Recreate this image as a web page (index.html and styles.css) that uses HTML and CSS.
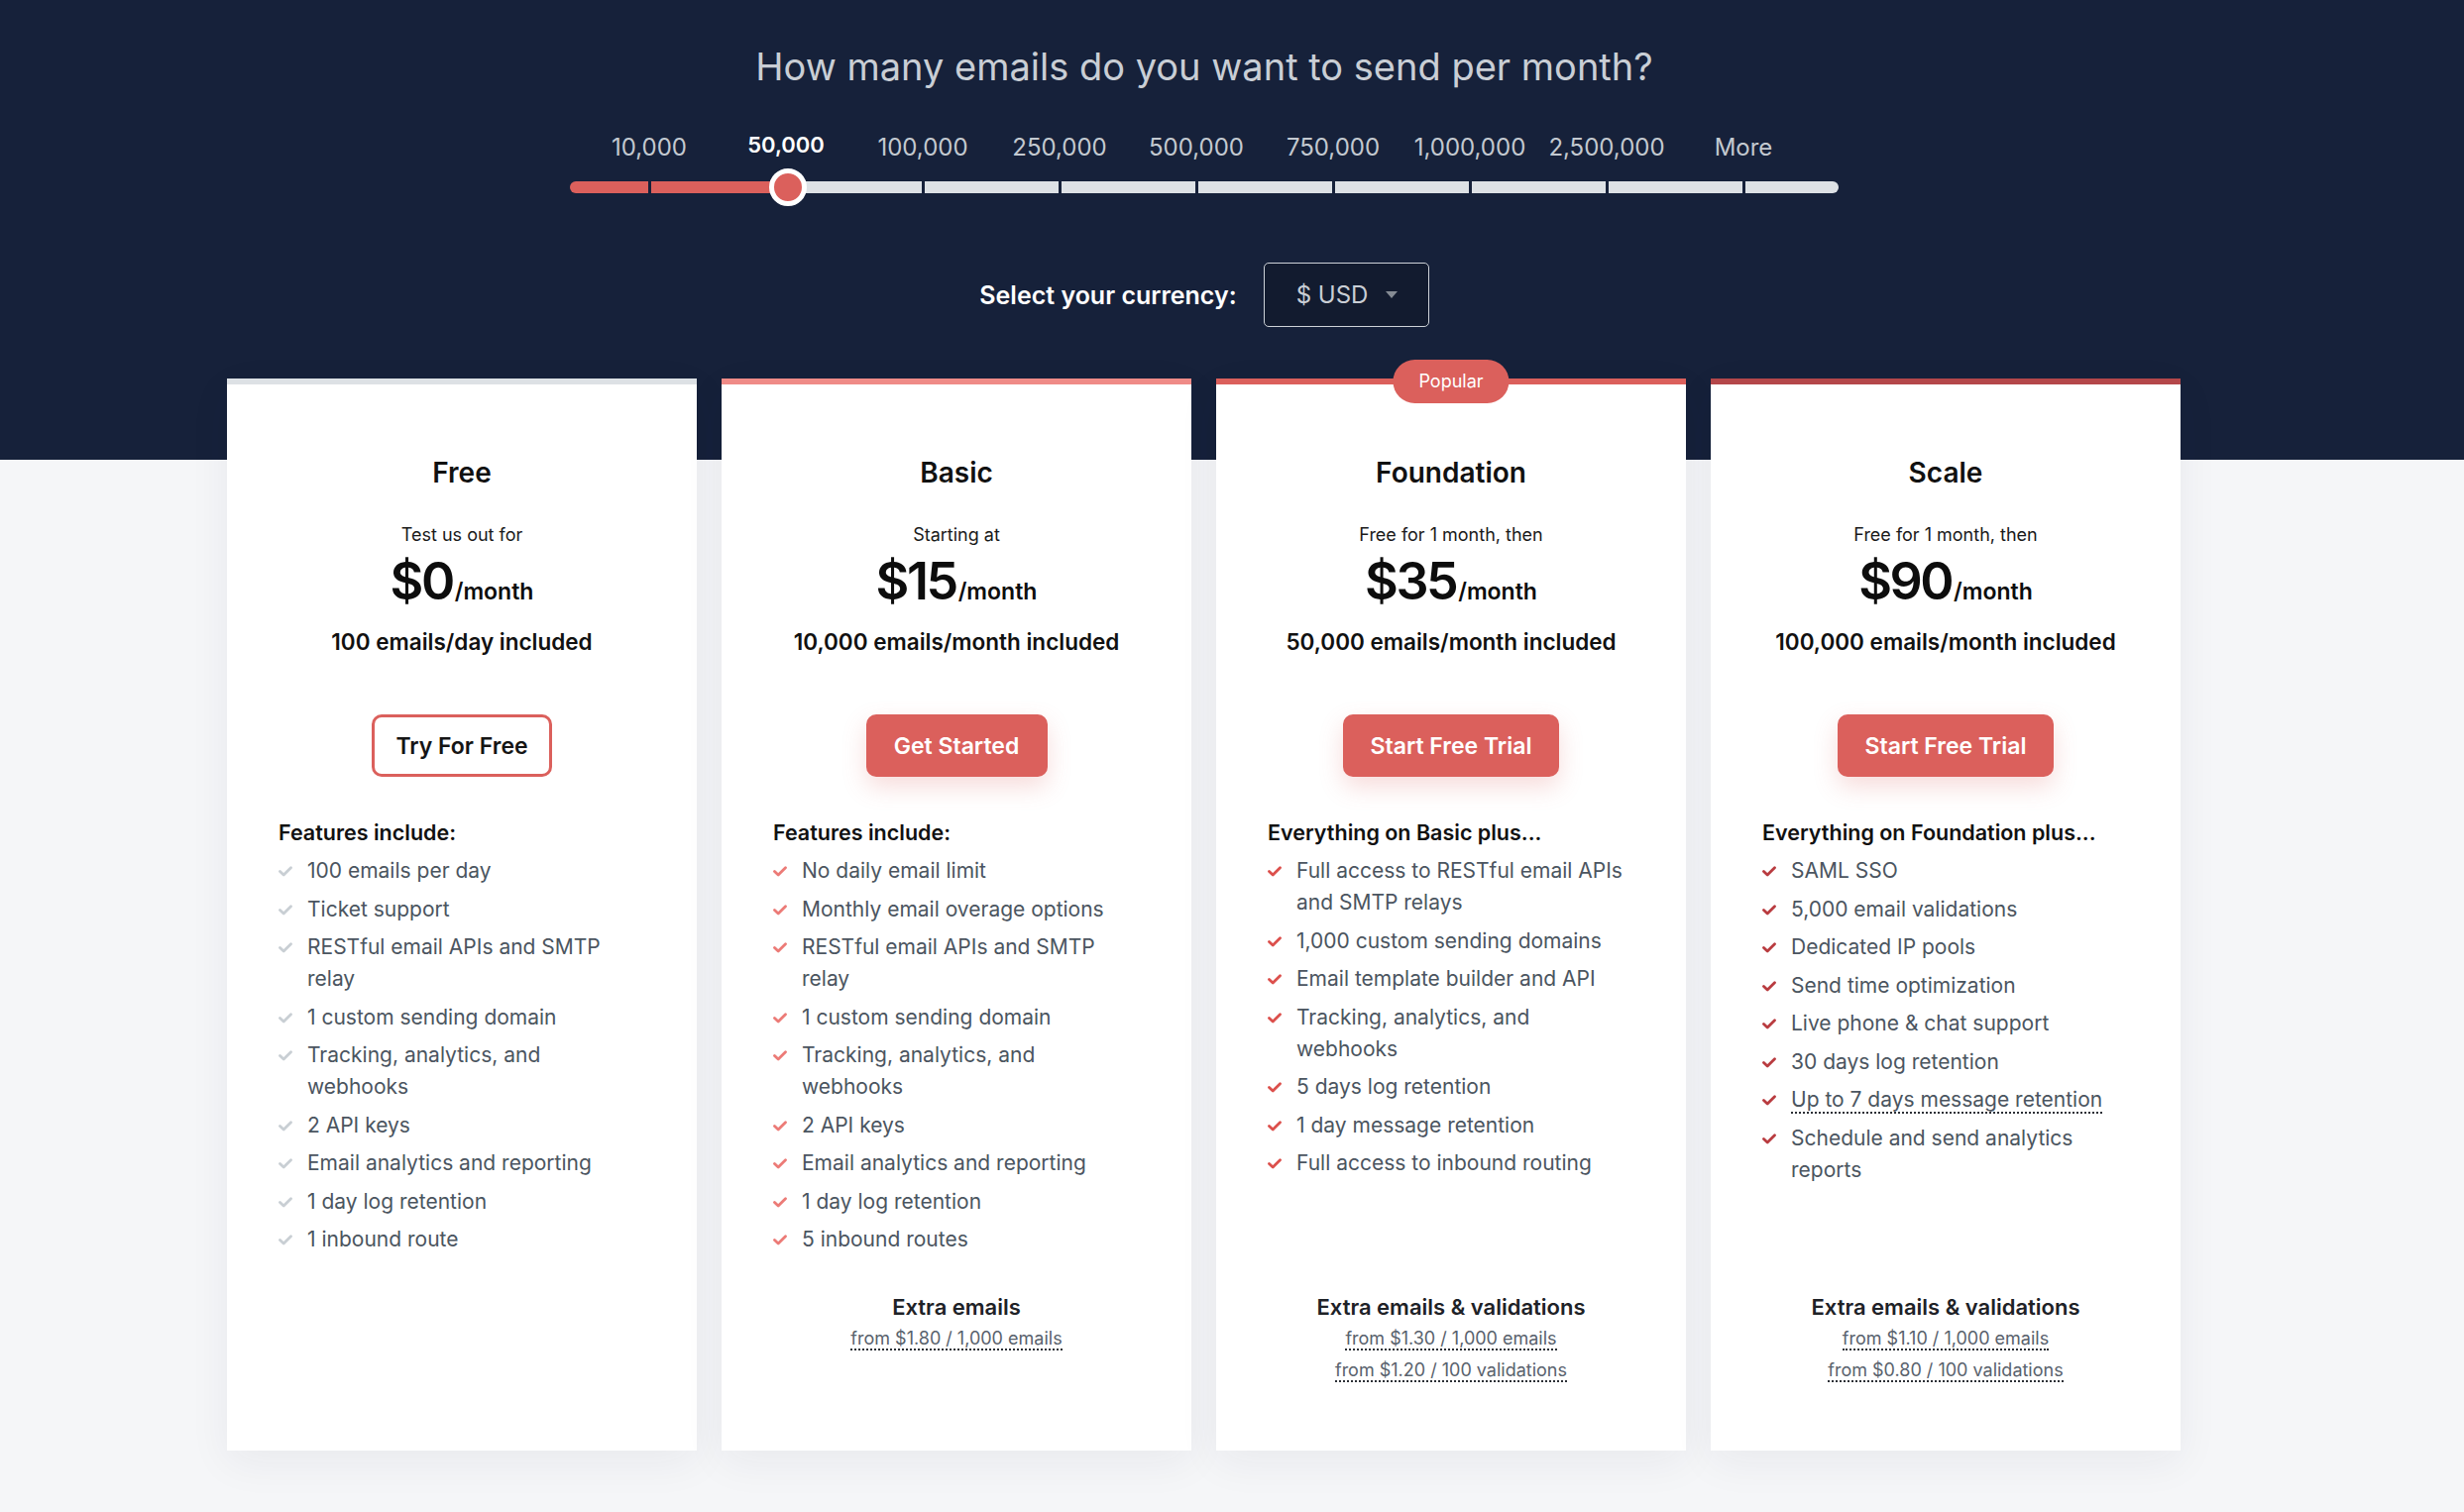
FILE: index.html
```html
<!DOCTYPE html>
<html lang="en">
<head>
<meta charset="utf-8">
<title>Pricing</title>
<link rel="stylesheet" href="styles.css">
</head>
<body>
<div class="page">
  <section class="hero">
    <h1 class="question">How many emails do you want to send per month?</h1>
    <div class="slider">
      <div class="labels">
        <span class="lbl">10,000</span>
        <span class="lbl active">50,000</span>
        <span class="lbl">100,000</span>
        <span class="lbl">250,000</span>
        <span class="lbl">500,000</span>
        <span class="lbl">750,000</span>
        <span class="lbl">1,000,000</span>
        <span class="lbl">2,500,000</span>
        <span class="lbl">More</span>
      </div>
      <div class="track">
        <span class="seg"><i class="tick"></i></span>
        <span class="seg"><i class="tick"></i></span>
        <span class="seg"><i class="tick"></i></span>
        <span class="seg"><i class="tick"></i></span>
        <span class="seg"><i class="tick"></i></span>
        <span class="seg"><i class="tick"></i></span>
        <span class="seg"><i class="tick"></i></span>
        <span class="seg"><i class="tick"></i></span>
        <span class="seg"><i class="tick"></i></span>
        <span class="handle"></span>
      </div>
    </div>
    <div class="currency">
      <span class="currency-label">Select your currency:</span>
      <div class="select"><span>$ USD</span><i class="caret"></i></div>
    </div>
  </section>

  <section class="plans">
    <!-- Free -->
    <article class="card card-free">
      <h2 class="plan-name">Free</h2>
      <p class="plan-sub">Test us out for</p>
      <p class="price"><span class="amount">$0</span><span class="per">/month</span></p>
      <p class="included">100 emails/day included</p>
      <div class="cta"><a class="btn btn-outline">Try For Free</a></div>
      <div class="features">
        <h3 class="feat-head">Features include:</h3>
        <ul class="feat-list">
          <li><svg class="chk" viewBox="0 0 14 11"><polyline points="1.5,5.5 5.2,9 12.5,1.8"/></svg><span>100 emails per day</span></li>
          <li><svg class="chk" viewBox="0 0 14 11"><polyline points="1.5,5.5 5.2,9 12.5,1.8"/></svg><span>Ticket support</span></li>
          <li><svg class="chk" viewBox="0 0 14 11"><polyline points="1.5,5.5 5.2,9 12.5,1.8"/></svg><span>RESTful email APIs and SMTP relay</span></li>
          <li><svg class="chk" viewBox="0 0 14 11"><polyline points="1.5,5.5 5.2,9 12.5,1.8"/></svg><span>1 custom sending domain</span></li>
          <li><svg class="chk" viewBox="0 0 14 11"><polyline points="1.5,5.5 5.2,9 12.5,1.8"/></svg><span>Tracking, analytics, and webhooks</span></li>
          <li><svg class="chk" viewBox="0 0 14 11"><polyline points="1.5,5.5 5.2,9 12.5,1.8"/></svg><span>2 API keys</span></li>
          <li><svg class="chk" viewBox="0 0 14 11"><polyline points="1.5,5.5 5.2,9 12.5,1.8"/></svg><span>Email analytics and reporting</span></li>
          <li><svg class="chk" viewBox="0 0 14 11"><polyline points="1.5,5.5 5.2,9 12.5,1.8"/></svg><span>1 day log retention</span></li>
          <li><svg class="chk" viewBox="0 0 14 11"><polyline points="1.5,5.5 5.2,9 12.5,1.8"/></svg><span>1 inbound route</span></li>
        </ul>
      </div>
    </article>

    <!-- Basic -->
    <article class="card card-basic">
      <h2 class="plan-name">Basic</h2>
      <p class="plan-sub">Starting at</p>
      <p class="price"><span class="amount">$15</span><span class="per">/month</span></p>
      <p class="included">10,000 emails/month included</p>
      <div class="cta"><a class="btn btn-fill">Get Started</a></div>
      <div class="features">
        <h3 class="feat-head">Features include:</h3>
        <ul class="feat-list">
          <li><svg class="chk" viewBox="0 0 14 11"><polyline points="1.5,5.5 5.2,9 12.5,1.8"/></svg><span>No daily email limit</span></li>
          <li><svg class="chk" viewBox="0 0 14 11"><polyline points="1.5,5.5 5.2,9 12.5,1.8"/></svg><span>Monthly email overage options</span></li>
          <li><svg class="chk" viewBox="0 0 14 11"><polyline points="1.5,5.5 5.2,9 12.5,1.8"/></svg><span>RESTful email APIs and SMTP relay</span></li>
          <li><svg class="chk" viewBox="0 0 14 11"><polyline points="1.5,5.5 5.2,9 12.5,1.8"/></svg><span>1 custom sending domain</span></li>
          <li><svg class="chk" viewBox="0 0 14 11"><polyline points="1.5,5.5 5.2,9 12.5,1.8"/></svg><span>Tracking, analytics, and webhooks</span></li>
          <li><svg class="chk" viewBox="0 0 14 11"><polyline points="1.5,5.5 5.2,9 12.5,1.8"/></svg><span>2 API keys</span></li>
          <li><svg class="chk" viewBox="0 0 14 11"><polyline points="1.5,5.5 5.2,9 12.5,1.8"/></svg><span>Email analytics and reporting</span></li>
          <li><svg class="chk" viewBox="0 0 14 11"><polyline points="1.5,5.5 5.2,9 12.5,1.8"/></svg><span>1 day log retention</span></li>
          <li><svg class="chk" viewBox="0 0 14 11"><polyline points="1.5,5.5 5.2,9 12.5,1.8"/></svg><span>5 inbound routes</span></li>
        </ul>
      </div>
      <div class="extras">
        <h4 class="extras-head">Extra emails</h4>
        <p class="extras-line"><span class="dotted">from $1.80 / 1,000 emails</span></p>
      </div>
    </article>

    <!-- Foundation -->
    <article class="card card-foundation">
      <span class="badge">Popular</span>
      <h2 class="plan-name">Foundation</h2>
      <p class="plan-sub">Free for 1 month, then</p>
      <p class="price"><span class="amount">$35</span><span class="per">/month</span></p>
      <p class="included">50,000 emails/month included</p>
      <div class="cta"><a class="btn btn-fill">Start Free Trial</a></div>
      <div class="features">
        <h3 class="feat-head">Everything on Basic plus...</h3>
        <ul class="feat-list">
          <li><svg class="chk" viewBox="0 0 14 11"><polyline points="1.5,5.5 5.2,9 12.5,1.8"/></svg><span>Full access to RESTful email APIs and SMTP relays</span></li>
          <li><svg class="chk" viewBox="0 0 14 11"><polyline points="1.5,5.5 5.2,9 12.5,1.8"/></svg><span>1,000 custom sending domains</span></li>
          <li><svg class="chk" viewBox="0 0 14 11"><polyline points="1.5,5.5 5.2,9 12.5,1.8"/></svg><span>Email template builder and API</span></li>
          <li><svg class="chk" viewBox="0 0 14 11"><polyline points="1.5,5.5 5.2,9 12.5,1.8"/></svg><span>Tracking, analytics, and webhooks</span></li>
          <li><svg class="chk" viewBox="0 0 14 11"><polyline points="1.5,5.5 5.2,9 12.5,1.8"/></svg><span>5 days log retention</span></li>
          <li><svg class="chk" viewBox="0 0 14 11"><polyline points="1.5,5.5 5.2,9 12.5,1.8"/></svg><span>1 day message retention</span></li>
          <li><svg class="chk" viewBox="0 0 14 11"><polyline points="1.5,5.5 5.2,9 12.5,1.8"/></svg><span>Full access to inbound routing</span></li>
        </ul>
      </div>
      <div class="extras">
        <h4 class="extras-head">Extra emails &amp; validations</h4>
        <p class="extras-line"><span class="dotted">from $1.30 / 1,000 emails</span></p>
        <p class="extras-line"><span class="dotted">from $1.20 / 100 validations</span></p>
      </div>
    </article>

    <!-- Scale -->
    <article class="card card-scale">
      <h2 class="plan-name">Scale</h2>
      <p class="plan-sub">Free for 1 month, then</p>
      <p class="price"><span class="amount">$90</span><span class="per">/month</span></p>
      <p class="included">100,000 emails/month included</p>
      <div class="cta"><a class="btn btn-fill">Start Free Trial</a></div>
      <div class="features">
        <h3 class="feat-head">Everything on Foundation plus...</h3>
        <ul class="feat-list">
          <li><svg class="chk" viewBox="0 0 14 11"><polyline points="1.5,5.5 5.2,9 12.5,1.8"/></svg><span>SAML SSO</span></li>
          <li><svg class="chk" viewBox="0 0 14 11"><polyline points="1.5,5.5 5.2,9 12.5,1.8"/></svg><span>5,000 email validations</span></li>
          <li><svg class="chk" viewBox="0 0 14 11"><polyline points="1.5,5.5 5.2,9 12.5,1.8"/></svg><span>Dedicated IP pools</span></li>
          <li><svg class="chk" viewBox="0 0 14 11"><polyline points="1.5,5.5 5.2,9 12.5,1.8"/></svg><span>Send time optimization</span></li>
          <li><svg class="chk" viewBox="0 0 14 11"><polyline points="1.5,5.5 5.2,9 12.5,1.8"/></svg><span>Live phone &amp; chat support</span></li>
          <li><svg class="chk" viewBox="0 0 14 11"><polyline points="1.5,5.5 5.2,9 12.5,1.8"/></svg><span>30 days log retention</span></li>
          <li><svg class="chk" viewBox="0 0 14 11"><polyline points="1.5,5.5 5.2,9 12.5,1.8"/></svg><span><span class="dotted">Up to 7 days message retention</span></span></li>
          <li><svg class="chk" viewBox="0 0 14 11"><polyline points="1.5,5.5 5.2,9 12.5,1.8"/></svg><span>Schedule and send analytics reports</span></li>
        </ul>
      </div>
      <div class="extras">
        <h4 class="extras-head">Extra emails &amp; validations</h4>
        <p class="extras-line"><span class="dotted">from $1.10 / 1,000 emails</span></p>
        <p class="extras-line"><span class="dotted">from $0.80 / 100 validations</span></p>
      </div>
    </article>
  </section>
</div>
</body>
</html>
```

FILE: styles.css
```css
* { box-sizing: border-box; }

html, body {
  margin: 0;
  padding: 0;
}

body {
  font-family: "Inter", "Liberation Sans", sans-serif;
  background: linear-gradient(to bottom, #16213a 0, #16213a 464px, #f5f6f8 464px, #f5f6f8 100%);
  min-height: 1526px;
  color: #111;
}

.page {
  width: 2430px;
}

/* ---------- hero ---------- */
.hero {
  padding-top: 43px;
  display: flex;
  flex-direction: column;
  align-items: center;
}

.question {
  margin: 0;
  font-size: 38px;
  line-height: 48px;
  font-weight: 400;
  color: #c9ced5;
}

.slider {
  width: 1280px;
  margin-top: 43px;
}

.labels {
  display: flex;
  padding-left: 11px;
  height: 30px;
}

.lbl {
  width: 138px;
  flex: 0 0 138px;
  text-align: center;
  font-size: 24px;
  line-height: 30px;
  color: #c3c9d0;
  white-space: nowrap;
}

.lbl.active {
  color: #ffffff;
  font-size: 22px;
  font-weight: 600;
  position: relative;
  top: -3px;
}

.track {
  position: relative;
  margin-top: 19px;
  height: 12px;
  border-radius: 6px;
  padding-left: 11px;
  display: flex;
  background: linear-gradient(to right, #db605c 0, #db605c 220px, #dde1e5 220px, #dde1e5 100%);
}

.seg {
  width: 138px;
  flex: 0 0 138px;
  display: flex;
  justify-content: center;
}

.tick {
  display: block;
  width: 3px;
  height: 12px;
  background: #16213a;
}

.handle {
  position: absolute;
  left: 201px;
  top: -13px;
  width: 38px;
  height: 38px;
  border-radius: 50%;
  background: #db605c;
  border: 5px solid #ffffff;
}

.currency {
  margin-top: 70px;
  display: flex;
  align-items: center;
  gap: 27px;
}

.currency-label {
  font-size: 25px;
  font-weight: 600;
  color: #ffffff;
}

.select {
  width: 167px;
  height: 65px;
  border: 1px solid #cdd2d8;
  border-radius: 5px;
  background: #121b2f;
  display: flex;
  align-items: center;
  justify-content: space-between;
  padding: 0 31px 0 32px;
  font-size: 24px;
  color: #c9ced5;
}

.caret {
  display: block;
  width: 0;
  height: 0;
  border-left: 6px solid transparent;
  border-right: 6px solid transparent;
  border-top: 7px solid #858b94;
}

/* ---------- plans ---------- */
.plans {
  margin-top: 52px;
  padding-left: 229px;
  display: grid;
  grid-template-columns: repeat(4, 474px);
  column-gap: 25px;
}

.card {
  position: relative;
  background: #ffffff;
  border-top: 6px solid #dde1e5;
  box-shadow: 0 12px 40px rgba(30, 40, 60, 0.06);
  padding: 71px 52px 65px;
  display: flex;
  flex-direction: column;
  align-items: stretch;
  text-align: center;
}

.card-basic { border-top-color: #ef8b87; }
.card-foundation { border-top-color: #db605c; }
.card-scale { border-top-color: #b4474a; }

.badge {
  position: absolute;
  top: -25px;
  left: 50%;
  transform: translateX(-50%);
  height: 44px;
  padding: 0 26px;
  border-radius: 22px;
  background: #db605c;
  color: #ffffff;
  font-size: 18px;
  line-height: 44px;
}

.plan-name {
  margin: 0;
  font-size: 28px;
  line-height: 36px;
  font-weight: 600;
  color: #111;
}

.plan-sub {
  margin: 32px 0 0;
  font-size: 18px;
  line-height: 26px;
  color: #1a1a1a;
}

.price {
  margin: 6px 0 0;
  font-size: 52px;
  line-height: 56px;
  color: #0d0d0d;
}

.amount {
  font-size: 52px;
  font-weight: 600;
  letter-spacing: -2.5px;
  margin-right: 2px;
}

.per {
  font-size: 23px;
  line-height: 1;
  font-weight: 600;
}

.included {
  margin: 17px 0 0;
  font-size: 22.5px;
  line-height: 32px;
  font-weight: 600;
  color: #111;
}

.cta {
  margin-top: 57px;
  display: flex;
  justify-content: center;
}

.btn {
  display: flex;
  align-items: center;
  justify-content: center;
  height: 63px;
  padding: 0 28px;
  border-radius: 10px;
  font-size: 23px;
  font-weight: 600;
  text-decoration: none;
  cursor: pointer;
}

.btn-outline {
  border: 3px solid #db605c;
  color: #151515;
  background: #ffffff;
  padding: 0 21px;
}

.btn-fill {
  background: #db605c;
  color: #ffffff;
  min-width: 183px;
  box-shadow: 0 10px 24px rgba(219, 96, 92, 0.22);
}

.features {
  margin-top: 40px;
  min-height: 479px;
  text-align: left;
}

.feat-head {
  margin: 0;
  font-size: 21.5px;
  line-height: 32px;
  font-weight: 600;
  color: #111;
}

.feat-list {
  list-style: none;
  margin: 7px 0 0;
  padding: 0;
}

.feat-list li {
  display: flex;
  align-items: flex-start;
  gap: 15px;
  font-size: 21px;
  line-height: 32px;
  color: #4b5560;
  margin-bottom: 6.5px;
}

.chk {
  flex: 0 0 14px;
  width: 14px;
  height: 11px;
  margin-top: 11px;
  fill: none;
  stroke: #c9cfd4;
  stroke-width: 2.8;
  stroke-linecap: round;
  stroke-linejoin: round;
}

.card-basic .chk { stroke: #ec7b77; }
.card-foundation .chk { stroke: #dc504c; }
.card-scale .chk { stroke: #b93c40; }

.dotted {
  border-bottom: 2px dotted #2c3036;
}

.extras {
  text-align: center;
}

.extras-head {
  margin: 0;
  font-size: 22px;
  line-height: 32px;
  font-weight: 600;
  color: #1e2227;
}

.extras-line {
  margin: 0;
  font-size: 18px;
  line-height: 32px;
  color: #59626d;
}
```
